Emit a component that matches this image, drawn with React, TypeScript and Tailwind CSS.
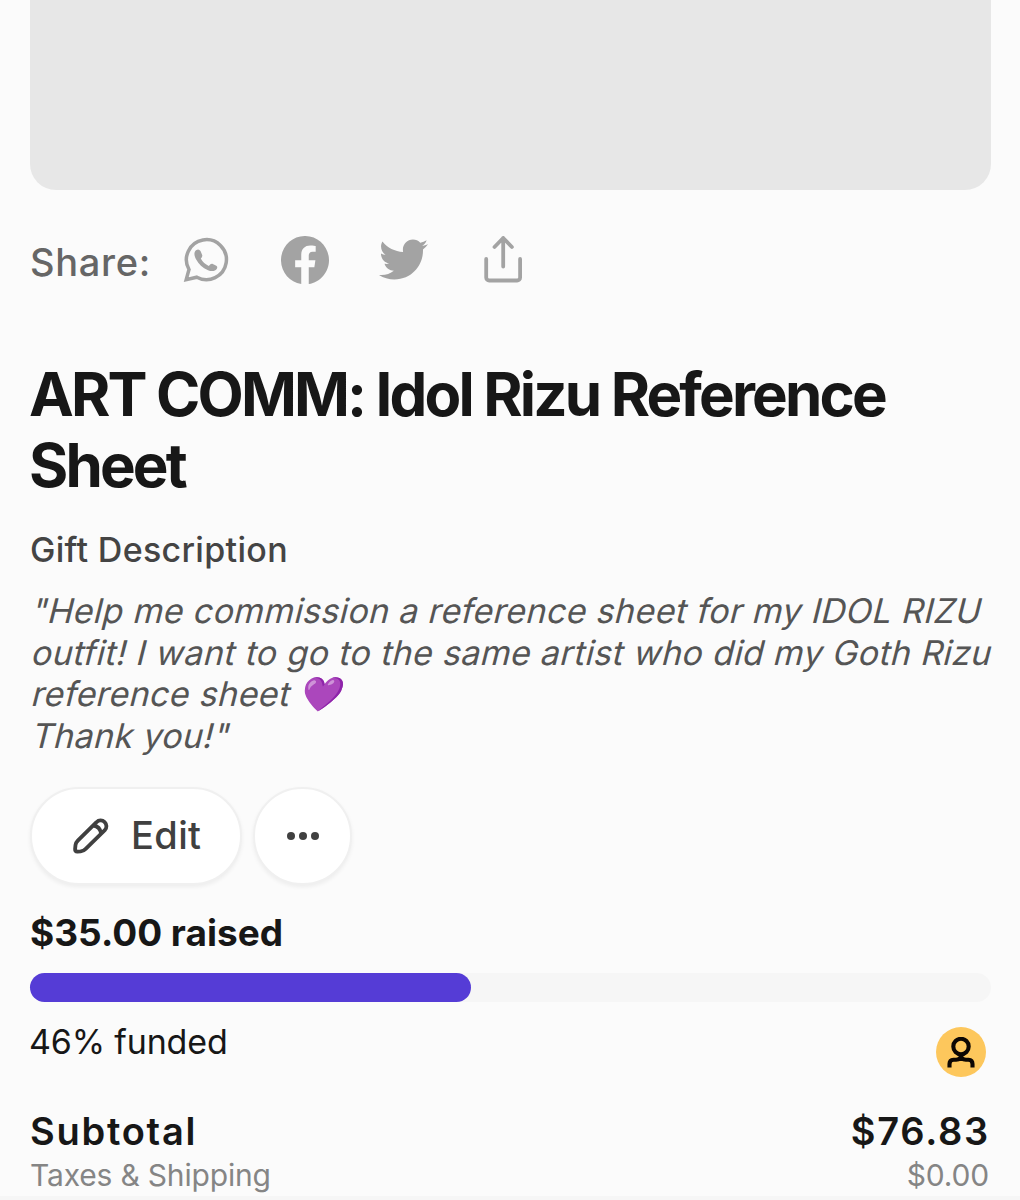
import React from "react";
import { BsFacebook } from "react-icons/bs";
import { FaTwitter } from "react-icons/fa";

const description = [
  "\"Help me commission a reference sheet for my IDOL RIZU",
  "outfit! I want to go to the same artist who did my Goth Rizu",
  "reference sheet 💜",
  "Thank you!\"",
];

function WhatsappIcon() {
  return (
    <svg width="52" height="52" viewBox="0 0 52 52" fill="none" className="-mt-[5px]">
      <path d="M6.200 45.600L9 35.500A20 20 0 1 1 16.800 43.200z" stroke="currentColor" strokeWidth="3.5" />
      <path d="M16 16.200Q18.800 14.300 20.500 17L22.200 21Q22.700 22.500 20.800 24.600Q23.500 29.800 28.800 32Q30.800 29.300 32.300 29.800L36.300 31.800Q37.800 32.600 37 34.400C35.300 37.500 31.500 37.700 28 36.200C22.500 34 18.600 29.800 16.200 25.500C14.500 22.500 13.300 18.500 16 16.200z" fill="currentColor" />
    </svg>
  );
}

function ShareIcon() {
  return (
    <svg width="40" height="48" viewBox="0 0 40 48" fill="none" stroke="currentColor" strokeWidth="3.8" strokeLinecap="round" strokeLinejoin="round">
      <path d="M3.200 24v18.500a3 3 0 0 0 3 3h27.900a3 3 0 0 0 3-3v-18.500" />
      <path d="M20.200 31.500v-28.500M11.500 12l8.700-9l8.700 9" />
    </svg>
  );
}

function PencilIcon() {
  return (
    <svg width="36" height="36" viewBox="0 0 36 36" fill="none" stroke="currentColor" strokeWidth="3.8" strokeLinejoin="round">
      <path d="M2.500 27Q2.900 24.500 4.800 22.600L23.500 4.200a5.700 5.700 0 0 1 8.300 8L12.700 30.800Q10.500 33 7.600 33.400L4.400 33.700Q2 33.500 2.100 31z" />
      <path d="M20.500 7.500q6.500 1 7.700 8.200" />
    </svg>
  );
}

export default function App() {
  return (
    <div className="h-[1200px] w-[1020px] overflow-hidden bg-[#fbfbfb] px-[30px] font-['Inter',sans-serif] text-[#171717]">
      <div className="h-[190px] w-[961px] rounded-b-[26px] bg-[#e7e7e7]" />

      <div className="mt-[42px] flex h-[60px] items-center text-[#a3a3a3]">
        <span className="w-[150px] whitespace-nowrap text-[38px] font-medium tracking-[0.018em] text-[#666]">Share:</span>
        <WhatsappIcon />
        <BsFacebook size={48} className="-mt-[5px] ml-[49px]" />
        <FaTwitter size={49} className="-mt-[6px] ml-[50px]" />
        <div className="-mt-[6px] ml-[55px]"><ShareIcon /></div>
      </div>

      <h1 className="-ml-[1px] mt-[67px] whitespace-nowrap text-[60px] font-bold leading-[71px] tracking-[-0.0475em]">
        ART COMM: Idol Rizu Reference<br />Sheet
      </h1>

      <h2 className="mt-[29px] text-[34px] font-medium leading-[40px] tracking-[0.009em] text-[#444]">Gift Description</h2>

      <p className="mt-[20px] whitespace-nowrap text-[34px] leading-[41.600px] tracking-[0.0103em] text-[#555]">
        {description.map((line) => (
          <span key={line} className="block origin-[0_33px] -skew-x-[14deg]">{line}</span>
        ))}
      </p>

      <div className="mt-[31px] flex gap-[11px] text-[#404040]">
        <button className="flex h-[98px] w-[212px] items-center rounded-full border-2 border-[#f0f0f0] bg-white pl-[41px] text-[38px] font-medium tracking-[0.01em] shadow-[0_2px_4px_rgba(0,0,0,0.06)]">
          <PencilIcon />
          <span className="-mt-[2px] ml-[22px]">Edit</span>
        </button>
        <button className="flex h-[98px] w-[99px] items-center justify-center gap-1 rounded-full border-2 border-[#f0f0f0] bg-white shadow-[0_2px_4px_rgba(0,0,0,0.06)]">
          <span className="size-2 rounded-full bg-current" />
          <span className="size-2 rounded-full bg-current" />
          <span className="size-2 rounded-full bg-current" />
        </button>
      </div>

      <div className="mt-[24px] h-[48px] text-[37px] font-bold leading-[48px]">$35.00 raised</div>
      <div className="mt-[16px] h-[29px] w-[961px] rounded-full bg-[#f6f6f6]">
        <div className="h-full rounded-full bg-[#553cd6]" style={{ width: "45.9%" }} />
      </div>

      <div className="mt-[20px] flex justify-between">
        <span className="-ml-px text-[34px] leading-[40px] tracking-[-0.005em]">46% funded</span>
        <span className="mr-[4px] mt-[5px] flex size-[50px] justify-center rounded-full bg-[#fdc75c] pt-[10px]">
          <svg width="28" height="31" viewBox="0 0 28 31" fill="none" stroke="#0c0703" strokeWidth="4.1">
            <circle cx="14" cy="9.500" r="7.700" />
            <path d="M2.500 30.500v-3.500q0-4 4-4.200h2.500q5-.3 5-4.800q0 4.500 5 4.800h2.500q4 .2 4 4.200v3.500" />
          </svg>
        </span>
      </div>

      <div className="mt-[30px] flex h-[48px] w-[960px] justify-between text-[38px] font-semibold leading-[48px] tracking-[0.046em]">
        <span>Subtotal</span><span>$76.83</span>
      </div>
      <div className="flex h-[40px] w-[959px] justify-between text-[30px] leading-[40px] tracking-[-0.006em] text-[#858585]">
        <span>Taxes &amp; Shipping</span><span>$0.00</span>
      </div>
      <div className="-mx-[30px] mt-px h-[4px] bg-[#f6f6f6]" />
    </div>
  );
}
